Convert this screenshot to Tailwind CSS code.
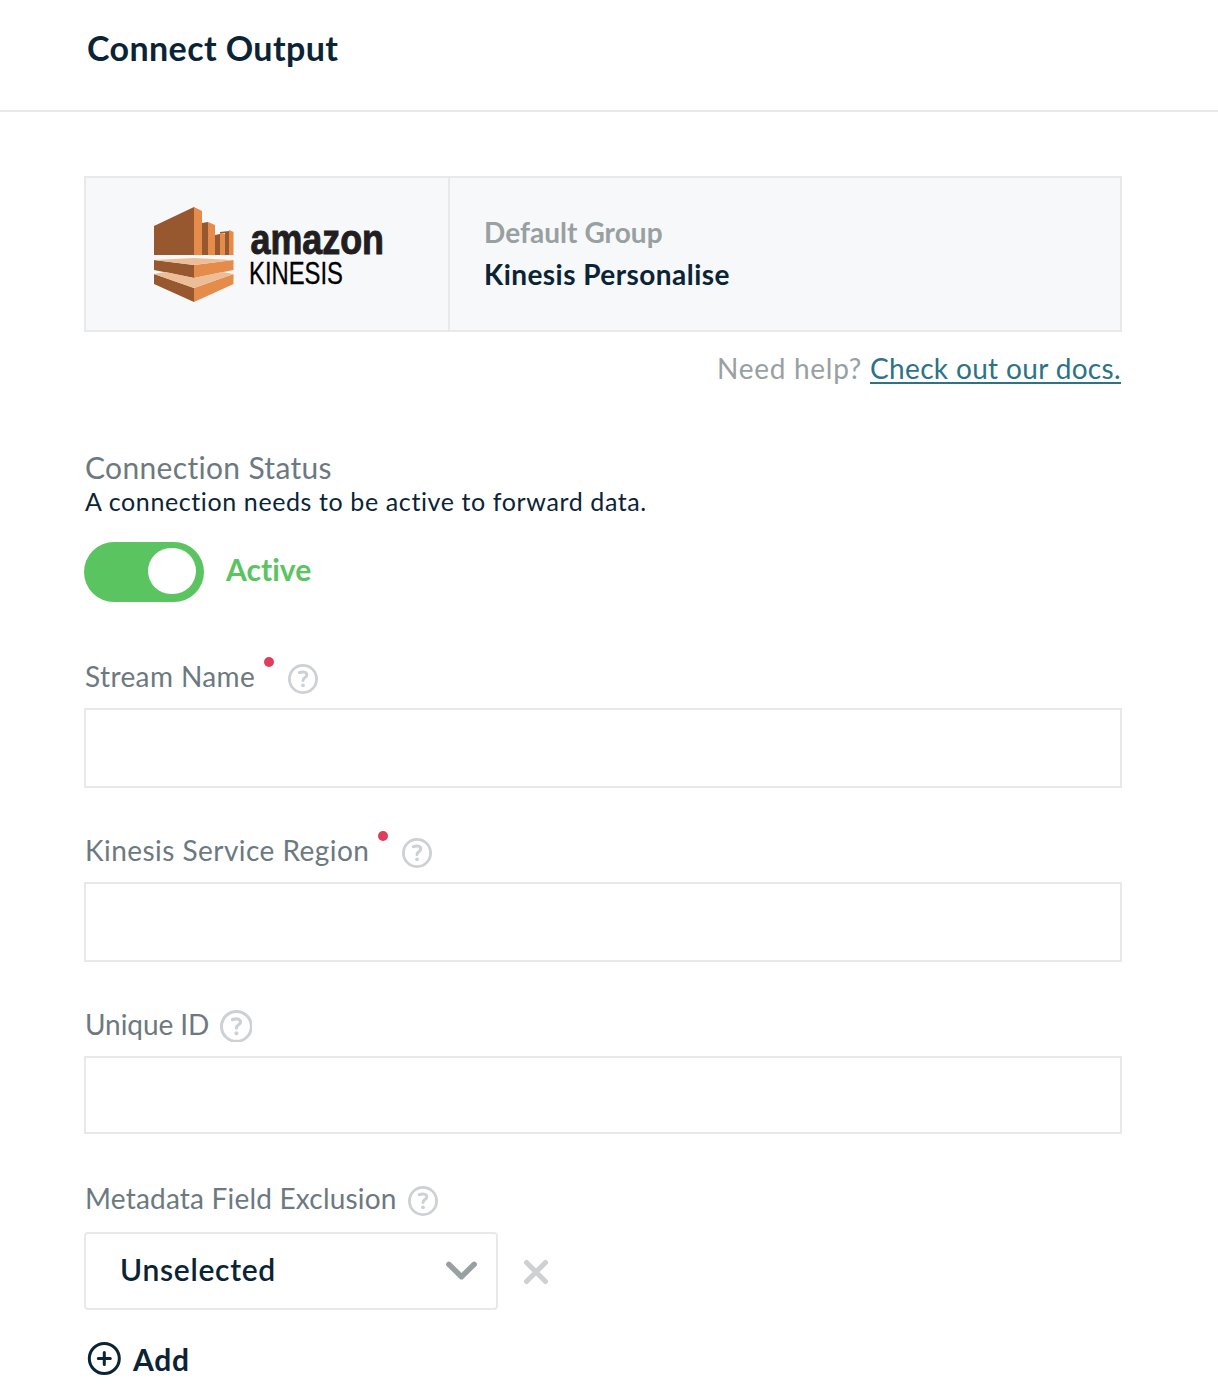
<!DOCTYPE html>
<html lang="en">
<head>
<meta charset="utf-8">
<title>Connect Output</title>
<script src="https://cdn.jsdelivr.net/npm/@tailwindcss/browser@4"></script>
</head>
<body class="bg-white font-['Lato',sans-serif] text-[#0a2436]">
<header class="flex h-28 items-center border-b-2 border-[#e8e9e9] pl-[87px] pb-[14px]">
  <h1 class="text-[34px] leading-10 font-bold tracking-[0.4px] whitespace-nowrap">Connect Output</h1>
</header>
<main class="flex w-[1122px] flex-col pl-[84px] pt-16">
  <section class="flex h-[156px] border-2 border-[#e8e9e9] bg-[#f7f8fa]">
    <div class="w-[364px] shrink-0 border-r-2 border-[#e8e9e9]">
      <svg class="block h-[152px] w-[362px]" viewBox="86 178 362 152">
        <path fill="#97572f" d="M154 226l40-19v48h-40zM202 223l6-1v33h-6zM215 235l5-1v21h-5zM220 232l9-1v24h-4v-22l-5 1zM154 260l40 5v13l-40-8zM154 274l40 14v14l-40-18z"/>
        <path fill="#e58c4b" d="M194 207l8 4v44h-8zM208 222l7 3v30h-7zM220 233l5 1v21h-5zM229 230l4.500 2v23H229zM194 265l39.500-5v10L194 278zM194 288l39.500-14v10L194 302z"/>
        <path fill="#edbd98" d="M154 260l40-2 39.500 2L194 265zM154 274l12-2 28 6 28-6 11.500 2L194 288z"/>
        <text x="250.500" y="253.500" font-family="Liberation Sans, sans-serif" font-weight="700" font-size="42" fill="#221e1f" stroke="#221e1f" stroke-width="1" textLength="133.500" lengthAdjust="spacingAndGlyphs">amazon</text>
        <text x="249" y="284" font-family="Liberation Sans, sans-serif" font-size="31" fill="#000" stroke="#000" stroke-width=".3" textLength="94" lengthAdjust="spacingAndGlyphs">KINESIS</text>
      </svg>
    </div>
    <div class="flex flex-col pl-[34px] pt-[33px] text-[28px] leading-[42px] font-bold whitespace-nowrap">
      <p class="tracking-[0.05px] text-[#98a0a2]">Default Group</p>
      <p class="tracking-[0.45px]">Kinesis Personalise</p>
    </div>
  </section>
  <p class="mt-[15px] flex h-[42px] items-center justify-end gap-2 text-[28px] whitespace-nowrap text-[#98a0a2]"><span class="tracking-[0.725px]">Need help?</span><a class="mr-px tracking-[0.343px] text-[#2d7286] underline decoration-2 underline-offset-[3px]">Check out our docs.</a></p>
  <h2 class="mt-[60px] h-9 pl-px text-[30px] leading-9 tracking-[0.33px] text-[#6c797f] whitespace-nowrap">Connection Status</h2>
  <p class="h-8 pl-px text-[25px] leading-8 tracking-[0.61px] whitespace-nowrap">A connection needs to be active to forward data.</p>
  <div class="mt-[25px] flex items-center gap-[22px]">
    <div class="flex h-[60px] w-[120px] items-center justify-end rounded-full bg-[#5ac460] pr-2 pb-0.5"><div class="h-[46px] w-12 rounded-full bg-white"></div></div>
    <span class="pb-1.5 text-[30px] font-bold tracking-[0.05px] text-[#5ac460]">Active</span>
  </div>

  <div class="mt-[53px] flex h-[53px] items-start pl-px text-[28px] leading-[42px] text-[#6c797f] whitespace-nowrap">
    <span class="w-[171px] tracking-[0.4px]">Stream Name</span>
    <i class="mt-0.5 ml-2 size-[10px] rounded-full bg-[#e13c5a]"></i>
    <svg class="mt-[9px] ml-[14px] size-[30px]" viewBox="0 0 30 30" fill="none" stroke="#cdd1d4"><circle cx="15" cy="15" r="13.600" stroke-width="2.800"/><path stroke-width="3" stroke-linecap="round" d="M11.300 8.600c3.500-1.400 7.500-.7 7.500 2.300 0 2.700-3.800 2.500-3.800 5.600"/><circle cx="15" cy="21.300" r="1.900" fill="#cdd1d4" stroke="none"/></svg>
  </div>
  <input class="h-20 border-2 border-[#e8e9e9]" aria-label="Stream Name">
  <div class="mt-[41px] flex h-[53px] items-start pl-px text-[28px] leading-[42px] text-[#6c797f] whitespace-nowrap">
    <span class="w-[285px] tracking-[0.46px]">Kinesis Service Region</span>
    <i class="mt-0.5 ml-2 size-[10px] rounded-full bg-[#e13c5a]"></i>
    <svg class="mt-[9px] ml-[14px] size-[30px]" viewBox="0 0 30 30" fill="none" stroke="#cdd1d4"><circle cx="15" cy="15" r="13.600" stroke-width="2.800"/><path stroke-width="3" stroke-linecap="round" d="M11.300 8.600c3.500-1.400 7.500-.7 7.500 2.300 0 2.700-3.800 2.500-3.800 5.600"/><circle cx="15" cy="21.300" r="1.900" fill="#cdd1d4" stroke="none"/></svg>
  </div>
  <input class="h-20 border-2 border-[#e8e9e9]" aria-label="Kinesis Service Region">
  <div class="mt-[41px] flex h-[53px] items-start pl-px text-[28px] leading-[42px] text-[#6c797f] whitespace-nowrap">
    <span class="w-[125px] tracking-[-0.06px]">Unique ID</span>
    <svg class="mt-[7px] ml-[10px] size-8" viewBox="0 0 30 30" fill="none" stroke="#cdd1d4"><circle cx="15.400" cy="15.400" r="14" stroke-width="2.800"/><path stroke-width="3" stroke-linecap="round" d="M11.700 9c3.500-1.400 7.500-.7 7.500 2.300 0 2.700-3.800 2.500-3.800 5.600"/><circle cx="15.400" cy="21.900" r="1.900" fill="#cdd1d4" stroke="none"/></svg>
  </div>
  <input class="h-[78px] border-2 border-[#e8e9e9]" aria-label="Unique ID">
  <div class="mt-[43px] flex h-[55px] items-start pl-px text-[28px] leading-[42px] text-[#6c797f] whitespace-nowrap">
    <span class="w-[312px] tracking-[0.2px]">Metadata Field Exclusion</span>
    <svg class="mt-[9px] ml-[11px] size-[30px]" viewBox="0 0 30 30" fill="none" stroke="#cdd1d4"><circle cx="15" cy="15" r="13.600" stroke-width="2.800"/><path stroke-width="3" stroke-linecap="round" d="M11.300 8.600c3.500-1.400 7.500-.7 7.500 2.300 0 2.700-3.800 2.500-3.800 5.600"/><circle cx="15" cy="21.300" r="1.900" fill="#cdd1d4" stroke="none"/></svg>
  </div>
  <div class="flex items-center">
    <div class="flex h-[78px] w-[414px] items-center justify-between rounded border-2 border-[#e8e9e9] pr-[19px] pl-[34px]">
      <span class="pb-1 text-[30px] font-semibold tracking-[0.709px]">Unselected</span>
      <svg class="h-5 w-[31px]" viewBox="0 0 31 20" fill="none" stroke="#98a0a2" stroke-width="5.400" stroke-linecap="round" stroke-linejoin="round"><path d="M2.800 3.300l12.700 12.400 12.700-12.400"/></svg>
    </div>
    <svg class="ml-[25px] mt-0.5 size-[26px]" viewBox="0 0 26 26" fill="none" stroke="#cdd1d4" stroke-width="5" stroke-linecap="round"><path d="M3.500 3.500l19 19M22.500 3.500l-19 19"/></svg>
  </div>
  <div class="mt-[31px] flex h-[36px] items-center gap-3 pl-[3px]">
    <svg class="size-[34px]" viewBox="0 0 34 34" fill="none" stroke="#0a2436" stroke-width="3"><circle cx="17.300" cy="16.500" r="15"/><path stroke-linecap="round" d="M11.300 16.500h12M17.300 10.500v12"/></svg>
    <span class="text-[30px] font-bold tracking-[0.7px]">Add</span>
  </div>
</main>
</body>
</html>
